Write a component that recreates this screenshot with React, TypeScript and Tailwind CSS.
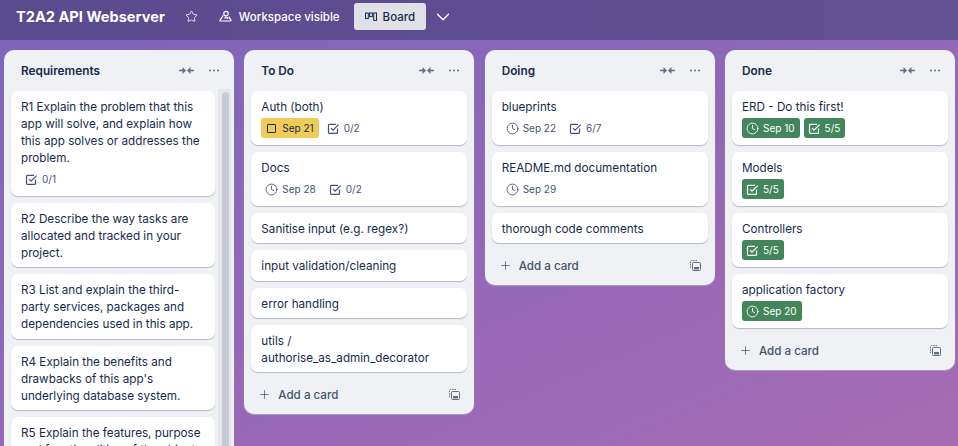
import { ChevronDown, Clock, Plus, Star } from 'lucide-react';

type CardData = {
    title: string;
    date?: string;
    dateTone?: 'yellow' | 'green';
    check?: string;
    checkGreen?: boolean;
};

type ColumnData = {
    title: string;
    cards: CardData[];
};

const todo: ColumnData = {
    title: 'To Do',
    cards: [
        { title: 'Auth (both)', date: 'Sep 21', dateTone: 'yellow', check: '0/2' },
        { title: 'Docs', date: 'Sep 28', check: '0/2' },
        { title: 'Sanitise input (e.g. regex?)' },
        { title: 'input validation/cleaning' },
        { title: 'error handling' },
        { title: 'utils / authorise_as_admin_decorator' },
    ],
};

const doing: ColumnData = {
    title: 'Doing',
    cards: [
        { title: 'blueprints', date: 'Sep 22', check: '6/7' },
        { title: 'README.md documentation', date: 'Sep 29' },
        { title: 'thorough code comments' },
    ],
};

const done: ColumnData = {
    title: 'Done',
    cards: [
        { title: 'ERD - Do this first!', date: 'Sep 10', dateTone: 'green', check: '5/5', checkGreen: true },
        { title: 'Models', check: '5/5', checkGreen: true },
        { title: 'Controllers', check: '5/5', checkGreen: true },
        { title: 'application factory', date: 'Sep 20', dateTone: 'green' },
    ],
};

const requirements: CardData[] = [
    { title: 'R1 Explain the problem that this app will solve, and explain how this app solves or addresses the problem.', check: '0/1' },
    { title: 'R2 Describe the way tasks are allocated and tracked in your project.' },
    { title: 'R3 List and explain the third-party services, packages and dependencies used in this app.' },
    { title: "R4 Explain the benefits and drawbacks of this app's underlying database system." },
    { title: 'R5 Explain the features, purpose and functionalities of the object' },
];

const CollapseIcon = () => (
    <svg width="15" height="9" viewBox="0 0 15 9" fill="#626f86">
        <path d="M0 3.8H3.5V1L7 4.5L3.5 8V5.2H0Z" />
        <path d="M15 3.8H11.5V1L8 4.5L11.5 8V5.2H15Z" />
    </svg>
);

const DotsIcon = () => (
    <svg width="10" height="3" viewBox="0 0 10 3" fill="#626f86">
        <circle cx="1" cy="1.5" r="1" />
        <circle cx="5" cy="1.5" r="1" />
        <circle cx="9" cy="1.5" r="1" />
    </svg>
);

const CheckIcon = () => (
    <svg width="13" height="13" viewBox="0 0 13 13" fill="none" stroke="currentColor" strokeWidth="1.2">
        <path d="M10.5 6.5V10.4C10.5 10.9 10.1 11.3 9.6 11.3H2.4C1.9 11.3 1.5 10.9 1.5 10.4V3.2C1.5 2.7 1.9 2.3 2.4 2.3H9" />
        <path d="M4 6.2L6 8.2L11.6 2.6" />
    </svg>
);

const PeopleIcon = () => (
    <svg width="13" height="13" viewBox="0 0 13 13" fill="none" stroke="#ffffff" strokeWidth="1.2" strokeLinejoin="round">
        <circle cx="7" cy="3.6" r="2.3" />
        <path d="M4.3 5.3L1 10.2C0.8 10.6 1 11 1.5 11H11.4C11.9 11 12.2 10.6 12 10.2L9.8 6.6" />
        <path d="M5.5 8.2C6.8 7.3 8.4 7.6 9.2 8.8" />
    </svg>
);

const BoardIcon = () => (
    <svg width="12" height="10" viewBox="0 0 12 10" fill="none" stroke="#172b4d" strokeWidth="1">
        <rect x="0.5" y="1" width="2.8" height="5.6" />
        <rect x="4.6" y="1" width="2.8" height="3.6" />
        <rect x="8.7" y="1" width="2.8" height="7.4" />
    </svg>
);

const TemplateIcon = () => (
    <svg width="11" height="11" viewBox="0 0 11 11" fill="none" stroke="#626f86" strokeWidth="1">
        <path d="M0.5 8V1.5C0.5 1 1 0.5 1.5 0.5H8" strokeDasharray="1.4 1" />
        <rect x="2.5" y="2.5" width="8" height="8" rx="1" />
        <rect x="4" y="7" width="5" height="2.4" fill="#626f86" stroke="none" />
    </svg>
);

const Badge = ({ tone, icon, text }: { tone?: 'yellow' | 'green'; icon: 'clock' | 'check' | 'box'; text: string }) => {
    const look =
        tone === 'yellow'
            ? 'bg-[#f0cb58] text-[#172b4d]'
            : tone === 'green'
              ? 'bg-[#43865c] text-white'
              : 'bg-transparent text-[#44546f]';
    return (
        <div className={`flex h-[20px] items-center gap-[4px] rounded-[3px] pl-[4px] pr-[5px] text-[10px] ${look}`}>
            {icon === 'clock' && <Clock size={13} strokeWidth={1.6} />}
            {icon === 'check' && <CheckIcon />}
            {icon === 'box' && <span className="mx-[2px] h-[9px] w-[9px] rounded-[1px] border-[1.3px] border-[#172b4d]" />}
            <span>{text}</span>
        </div>
    );
};

const Card = ({ card }: { card: CardData }) => {
    const hasBadges = card.date || card.check;
    return (
        <div className={`rounded-[7px] bg-white px-[10px] pt-[8px] shadow-[0_1px_1px_#b5bac7] ${hasBadges ? 'pb-[7px]' : 'pb-[5.33px]'}`}>
            <p className="text-[11.7px] leading-[17px] text-[#172b4d]">{card.title}</p>
            {hasBadges && (
                <div className="mt-[2px] flex items-center gap-[4px]">
                    {card.date && (
                        <Badge
                            tone={card.dateTone}
                            icon={card.dateTone === 'yellow' ? 'box' : 'clock'}
                            text={card.date}
                        />
                    )}
                    {card.check && <Badge tone={card.checkGreen ? 'green' : undefined} icon="check" text={card.check} />}
                </div>
            )}
        </div>
    );
};

const ColumnHeader = ({ title }: { title: string }) => (
    <div className="flex h-[41px] items-center pl-[17px] pr-[15px]">
        <h2 className="flex-1 pt-[2px] text-[11.8px] font-semibold text-[#172b4d]">{title}</h2>
        <CollapseIcon />
        <span className="ml-[15px]">
            <DotsIcon />
        </span>
    </div>
);

const Column = ({ column }: { column: ColumnData }) => (
    <section className="w-[230px] shrink-0 rounded-[10px] bg-[#f0f1f4] shadow-[0_1px_1px_#a99bc4]">
        <ColumnHeader title={column.title} />
        <div className="flex flex-col gap-[7px] px-[7px]">
            {column.cards.map((card) => (
                <Card key={card.title} card={card} />
            ))}
        </div>
        <div className="flex h-[42px] items-center px-[14px] pt-[3px] text-[11.6px] font-medium text-[#44546f]">
            <Plus size={13} strokeWidth={1.4} className="mr-[7px]" />
            <span className="flex-1 pt-[2px]">Add a card</span>
            <TemplateIcon />
        </div>
    </section>
);

export default function App() {
    return (
        <div className="flex h-[446px] w-[958px] flex-col overflow-hidden font-['Inter',sans-serif]">
            <header className="flex h-[40px] shrink-0 items-center bg-gradient-to-r from-[#5a4a8e] to-[#635193] pb-[7px] pl-[16px] text-white">
                <h1 className="pt-[2px] text-[14.6px] font-bold">T2A2 API Webserver</h1>
                <Star size={13} strokeWidth={1.5} className="ml-[20px]" />
                <div className="ml-[21px] flex items-center gap-[7px] text-[11.5px] font-medium">
                    <PeopleIcon />
                    <span className="pt-[2px]">Workspace visible</span>
                </div>
                <div className="ml-[14px] flex h-[27px] w-[72px] items-center gap-[6px] rounded-[3px] bg-[#dfe1e6] pl-[11px] text-[11.5px] font-medium text-[#172b4d]">
                    <BoardIcon />
                    <span className="pt-[2px]">Board</span>
                </div>
                <ChevronDown size={22} strokeWidth={1.5} className="ml-[6px]" />
            </header>
            <main className="flex flex-1 items-start gap-[10.33px] overflow-hidden bg-gradient-to-br from-[#7c65bb] to-[#a76bb4] pl-[4px] pt-[10px]">
                <section className="w-[230px] shrink-0 rounded-t-[10px] bg-[#f0f1f4]">
                    <ColumnHeader title="Requirements" />
                    <div className="flex gap-[3px] pl-[7px]">
                        <div className="flex w-[204px] shrink-0 flex-col gap-[7px]">
                            {requirements.map((card) => (
                                <Card key={card.title} card={card} />
                            ))}
                        </div>
                        <div className="-mt-[2px] w-[13px] self-stretch bg-[#e4e6ea] py-[3px] pl-[4px] pr-[2px]">
                            <div className="h-full rounded-full bg-[#c7cbd5]" />
                        </div>
                    </div>
                </section>
                <Column column={todo} />
                <Column column={doing} />
                <Column column={done} />
            </main>
        </div>
    );
}
